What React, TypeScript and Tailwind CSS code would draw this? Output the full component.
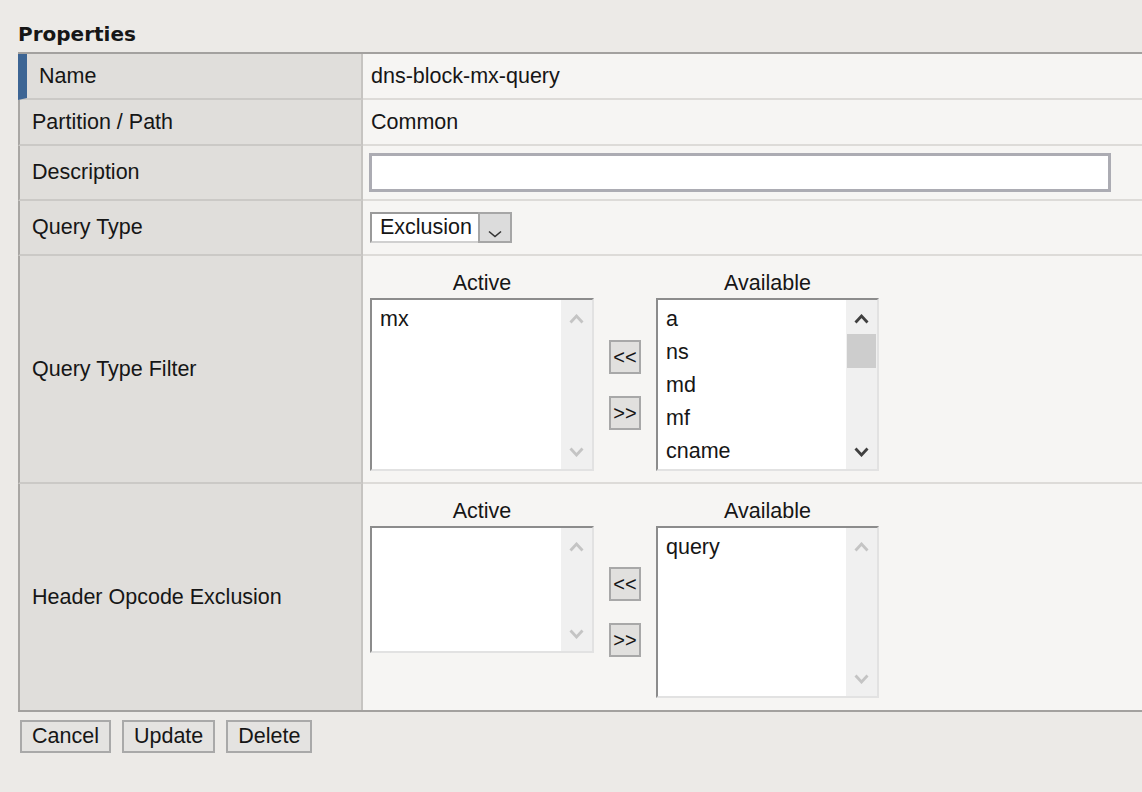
import React from "react";

type RowProps = {
  label: string;
  height: string;
  accent?: boolean;
  last?: boolean;
  align?: string;
  children?: React.ReactNode;
};

const Row: React.FC<RowProps> = ({ label, height, accent, last, align, children }) => {
  return (
    <div className={`flex ${height}`}>
      <div
        className={`flex w-[345px] shrink-0 items-center border-r-2 border-r-[#c6c4c1] bg-[#e0dedb] pl-[12px] ${
          accent ? "border-l-[9px] border-l-[#3d6594]" : "border-l-2 border-l-[#a9a7a4]"
        } ${last ? "" : "border-b-2 border-b-[#cbc9c6]"}`}
      >
        {label}
      </div>
      <div
        className={`flex flex-1 bg-[#f6f5f3] pl-[8px] ${last ? "" : "border-b-2 border-b-[#dddbd8]"} ${
          align ?? "items-center"
        }`}
      >
        {children}
      </div>
    </div>
  );
};

const ScrollChevron: React.FC<{ up?: boolean; dark?: boolean }> = ({ up, dark }) => (
  <svg width="15" height="10" viewBox="0 0 15 10">
    <polyline
      points={up ? "1.5,8.5 7.5,2 13.5,8.5" : "1.5,1.5 7.5,8 13.5,1.5"}
      fill="none"
      stroke={dark ? "#404040" : "#c4c4c4"}
      strokeWidth="2.8"
    />
  </svg>
);

type ListBoxProps = {
  items: string[];
  size: string;
  scrollable?: boolean;
  className?: string;
};

const ListBox: React.FC<ListBoxProps> = ({ items, size, scrollable, className }) => (
  <div
    className={`flex border-2 border-t-[#8c8c8c] border-l-[#8c8c8c] border-r-[#e2e2e2] border-b-[#e2e2e2] bg-white ${size} ${
      className ?? ""
    }`}
  >
    <div className="flex-1 overflow-hidden pt-[3px] pl-[8px] leading-[33px]">
      {items.map((item) => (
        <div key={item}>{item}</div>
      ))}
    </div>
    <div className="flex w-[31px] flex-col bg-[#f0f0f0]">
      <div className="flex h-[34px] items-center justify-center pt-[3px]">
        <ScrollChevron up dark={scrollable} />
      </div>
      {scrollable && <div className="mx-[1px] h-[34px] bg-[#cdcdcd]" />}
      <div className="flex-1" />
      <div className="flex h-[34px] items-center justify-center">
        <ScrollChevron dark={scrollable} />
      </div>
    </div>
  </div>
);

const MoveButton: React.FC<{ label: string }> = ({ label }) => (
  <button className="flex h-[34px] w-[32px] items-center justify-center border-2 border-[#a8a8a8] bg-[#e1e0de] text-[20px] leading-none">
    {label}
  </button>
);

type DualListProps = {
  active: string[];
  available: string[];
  activeSize: string;
  availableSize: string;
  scrollable?: boolean;
};

const DualList: React.FC<DualListProps> = ({ active, available, activeSize, availableSize, scrollable }) => (
  <div className="-ml-[1px] grid grid-cols-[224px_32px_223px] gap-x-[15px] gap-y-[3px] pt-[15px]">
    <div className="text-center leading-[24px]">Active</div>
    <div />
    <div className="text-center leading-[24px]">Available</div>
    <ListBox items={active} size={activeSize} className="self-start" />
    <div className="flex flex-col gap-[22px] self-center">
      <MoveButton label="<<" />
      <MoveButton label=">>" />
    </div>
    <ListBox items={available} size={availableSize} scrollable={scrollable} />
  </div>
);

export default function App() {
  return (
    <div className="min-h-screen bg-[#eceae7] font-['Liberation_Sans',Arial,sans-serif] text-[21.5px] text-[#161616]">
      <div className="pt-[22px] pl-[18px] font-['DejaVu_Sans',sans-serif] text-[20px] leading-[24px] font-bold">
        Properties
      </div>

      {/* properties table */}
      <div className="mt-[6px] ml-[18px] border-t-2 border-b-2 border-[#a3a19f]">
        <Row label="Name" height="h-[46px]" accent>
          dns-block-mx-query
        </Row>
        <Row label="Partition / Path" height="h-[46px]">
          Common
        </Row>
        <Row label="Description" height="h-[55px]">
          <input className="-ml-[2px] h-[39px] w-[742px] border-[3px] border-[#acacb3] bg-white outline-none" />
        </Row>
        <Row label="Query Type" height="h-[55px]">
          <div className="-ml-[1px] flex h-[31px]">
            <div className="border-2 border-r-0 border-t-[#9a9a9a] border-l-[#9a9a9a] border-b-[#d0d0d0] bg-white pr-[6px] pl-[8px] leading-[27px]">
              Exclusion
            </div>
            <div className="flex w-[34px] items-center justify-center border-2 border-[#a6a6a6] bg-[#dcdcdc] pt-[12px]">
              <svg width="14" height="8" viewBox="0 0 14 8">
                <polyline points="1,1.5 7,6.5 13,1.5" fill="none" stroke="#333" strokeWidth="1.6" />
              </svg>
            </div>
          </div>
        </Row>
        <Row label="Query Type Filter" height="h-[228px]" align="items-start">
          <DualList
            active={["mx"]}
            available={["a", "ns", "md", "mf", "cname"]}
            activeSize="h-[173px] w-[224px]"
            availableSize="h-[173px] w-[223px]"
            scrollable
          />
        </Row>
        <Row label="Header Opcode Exclusion" height="h-[226px]" align="items-start" last>
          <DualList
            active={[]}
            available={["query"]}
            activeSize="h-[127px] w-[224px]"
            availableSize="h-[172px] w-[223px]"
          />
        </Row>
      </div>

      {/* actions */}
      <div className="mt-[8px] ml-[20px] flex gap-[11px]">
        {["Cancel", "Update", "Delete"].map((b) => (
          <button
            key={b}
            className="h-[33px] border-2 border-[#a9a9a9] bg-[#e4e3e1] px-[10px] leading-[29px]"
          >
            {b}
          </button>
        ))}
      </div>
    </div>
  );
}
